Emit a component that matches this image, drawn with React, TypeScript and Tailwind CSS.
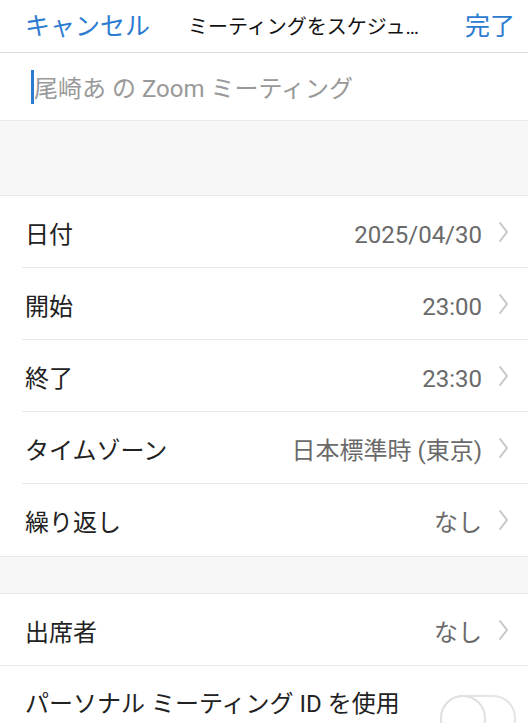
const rows1 = [
  { label: "日付", value: "2025/04/30" },
  { label: "開始", value: "23:00" },
  { label: "終了", value: "23:30" },
  { label: "タイムゾーン", value: "日本標準時 (東京)" },
  { label: "繰り返し", value: "なし" },
];

const Chevron = () => (
  <svg width="12" height="22" viewBox="0 0 12 22" className="mb-[6px] ml-[16px] mr-[2px] shrink-0">
    <path d="M2 2 L9 11 L2 20" fill="none" stroke="#c6c6c6" strokeWidth="2" strokeLinecap="round" strokeLinejoin="round" />
  </svg>
);

const Row = ({ label, value, last }: { label: string; value: string; last?: boolean }) => (
  <div className="bg-white pl-[22px]">
    <div className={`flex h-[72px] items-center pr-[16px] pt-[6px] ${last ? "" : "border-b border-[#e8e8e8]"}`}>
      <span className="pl-[3px] text-[24px] text-[#222]">{label}</span>
      <span className="ml-auto text-[24px] text-[#6a6a6a]">{value}</span>
      <Chevron />
    </div>
  </div>
);

export default function App() {
  return (
    <div className="h-[723px] w-[528px] overflow-hidden bg-white font-['Roboto','Noto_Sans_CJK_JP',sans-serif]">
      <div className="flex h-[53px] items-center border-b border-[#dcdcdc] pl-[25px] pr-[13px] pt-[2px]">
        <span className="text-[25px] text-[#2b7bd0]">キャンセル</span>
        <span className="ml-[38px] text-[20px] text-[#111]">ミーティングをスケジュ…</span>
        <span className="ml-auto text-[25px] text-[#2b7bd0]">完了</span>
      </div>
      <div className="flex h-[68px] items-center border-b border-[#ebebeb] pl-[31px] pt-[4px]">
        <span className="mb-[4px] h-[34px] w-[3px] bg-[#2b7bd0]" />
        <span className="text-[24px] text-[#999]">尾崎あ の Zoom ミーティング</span>
      </div>
      <div className="h-[75px] border-b border-[#e8e8e8] bg-[#f7f7f7]" />
      {rows1.map((r, i) => (
        <Row key={r.label} label={r.label} value={r.value} last={i === rows1.length - 1} />
      ))}
      <div className="h-[38px] border-y border-[#e8e8e8] bg-[#f7f7f7]" />
      <div className="flex h-[72px] items-center border-b border-[#e8e8e8] pl-[25px] pr-[16px] pt-[6px]">
        <span className="text-[24px] text-[#222]">出席者</span>
        <span className="ml-auto text-[24px] text-[#6a6a6a]">なし</span>
        <Chevron />
      </div>
      <div className="flex h-[72px] items-start pl-[25px] pr-[12px] pt-[20px]">
        <span className="text-[24px] text-[#222]">パーソナル ミーティング ID を使用</span>
        <div className="relative ml-auto mt-[9px] h-[46px] w-[76px] shrink-0 rounded-full border-2 border-[#e4e4e4] bg-white">
          <div className="absolute -left-[2px] -top-[2px] h-[46px] w-[46px] rounded-full border-2 border-[#e0e0e0] bg-white" />
        </div>
      </div>
    </div>
  );
}
